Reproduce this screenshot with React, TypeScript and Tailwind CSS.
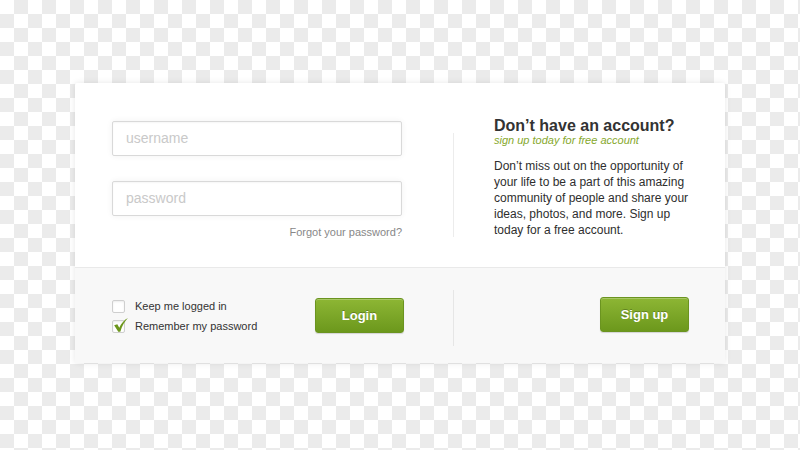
import React from 'react';

const Checkbox = ({ checked }: { checked?: boolean }) => <span className="relative block w-[13px] h-[13px] bg-white border border-[#cfcfcf] rounded-[2px] shadow-[inset_0_1px_2px_rgba(0,0,0,0.08)]">
    {checked && <svg viewBox="0 0 14 14" className="absolute left-[0px] top-[-4px] w-[16px] h-[16px]">
        <path d="M1 7.2 L3.8 6.4 L5.5 9.4 C7 5.8 9.6 2.6 13 0.8 C10.4 3.6 7.9 7.6 6.4 12.8 L4.6 12.8 Z" fill="#6c961c" />
      </svg>}
  </span>;

const GreenButton = ({ label }: { label: string }) => <button className="w-[89px] h-[35px] rounded-[3px] bg-gradient-to-b from-[#8db634] to-[#6c981c] border border-[#6b9420] shadow-[inset_0_1px_0_rgba(255,255,255,0.25),0_1px_1px_rgba(0,0,0,0.15)] text-white text-[13px] font-bold [text-shadow:0_-1px_0_rgba(0,0,0,0.25)]">
    {label}
  </button>;

const Field = ({ placeholder }: { placeholder: string }) => <div className="w-[290px] h-[35px] bg-white border border-[#d9d9d9] rounded-[2px] shadow-[0_0_6px_rgba(0,0,0,0.06),inset_0_1px_2px_rgba(0,0,0,0.04)] flex items-center px-[13px]">
    <span className="text-[14px] text-[#c9c9c9]">{placeholder}</span>
  </div>;

export default function App() {
  return <div className="w-[800px] h-[450px] pt-[83px] pl-[75px] bg-[conic-gradient(#ebebeb_25%,#fff_0_50%,#ebebeb_0_75%,#fff_0)] bg-[length:28px_28px] font-['Liberation_Sans',Arial,sans-serif]">
      <div className="w-[650px] h-[280px] bg-white rounded-[2px] shadow-[0_0_6px_rgba(0,0,0,0.1)] flex flex-col">
        <div className="h-[184px] flex">
          <div className="w-[378px] pl-[37px] pt-[38px]">
            <Field placeholder="username" />
            <div className="mt-[25px]">
              <Field placeholder="password" />
            </div>
            <p className="w-[290px] text-right text-[11px] text-[#888] mt-[8px]">Forgot your password?</p>
          </div>
          <div className="w-px bg-[#ececec] mt-[50px] mb-[30px]" />
          <div className="pl-[40px] pt-[35px]">
            <h2 className="text-[16px] leading-[16px] font-bold text-[#333]">Don’t have an account?</h2>
            <p className="text-[11px] leading-[12px] italic text-[#86a82c]">sign up today for free account</p>
            <p className="mt-[12px] w-[205px] text-[12px] leading-[16px] text-[#2e2e2e]">
              Don’t miss out on the opportunity of your life to be a part of this amazing community of people and share your ideas, photos, and more. Sign up today for a free account.
            </p>
          </div>
        </div>
        <div className="flex-1 flex bg-[#f8f8f8] border-t border-[#e9e9e9]">
          <div className="w-[378px] pl-[37px] pr-[49px] flex items-center justify-between">
            <div className="flex flex-col gap-[3px] pt-[2px]">
              <label className="flex items-center gap-[10px] text-[11px] leading-[17px] text-[#333]"><Checkbox />Keep me logged in</label>
              <label className="flex items-center gap-[10px] text-[11px] leading-[17px] text-[#333]"><Checkbox checked />Remember my password</label>
            </div>
            <GreenButton label="Login" />
          </div>
          <div className="w-px bg-[#e6e6e6] mt-[22px] mb-[17px]" />
          <div className="flex-1 flex items-center justify-end pr-[36px] pb-[2px]">
            <GreenButton label="Sign up" />
          </div>
        </div>
      </div>
    </div>;
}
